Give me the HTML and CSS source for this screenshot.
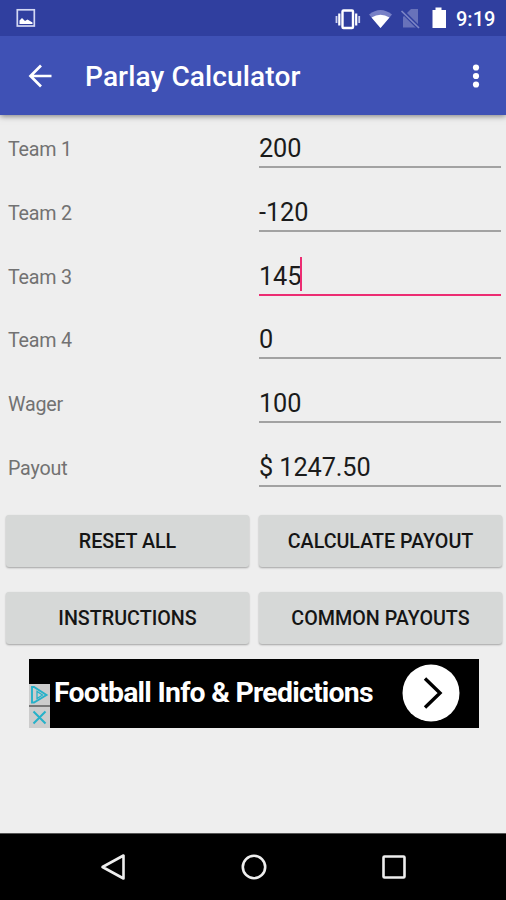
FILE: index.html
```html
<!DOCTYPE html>
<html lang="en">
<head>
<meta charset="utf-8">
<title>Parlay Calculator</title>
<link rel="stylesheet" href="styles.css">
</head>
<body>
<div class="screen">
  <header class="top">
    <div class="status">
      <svg class="status-picture" width="20" height="20" viewBox="0 0 20 20"><rect x="1.300" y="1.800" width="17" height="16.200" fill="none" stroke="#d3d8f3" stroke-width="1.700"/><path d="M3.500 16v-3.500l2.500-2.500 3 3 2.500-1.500 5 3V16z" fill="#fff"/></svg>
      <svg class="status-icons" width="114" height="24" viewBox="0 0 114 24">
        <g fill="none" stroke="#fff"><rect x="8.500" y="4.500" width="10.500" height="17.500" rx="1" stroke-width="2.400"/><path d="M5.300 7.500v12M22.200 7.500v12" stroke-width="2.200"/><path d="M2.500 10v7M25.200 10v7" stroke="#cbd0ef" stroke-width="1.800"/></g>
        <path d="M35 8.500Q46.500 -.5 58 8.500L46.500 22z" fill="#7881c6"/><path d="M37.500 11.500Q46.500 6 55.500 11.500L46.500 22z" fill="#fff"/>
        <path d="M72 8l5-5h7v18.500H69V11z" fill="#6872ba"/><path d="M67 4l18 18" stroke="#303f9f" stroke-width="4"/><path d="M67.500 5l17.500 17" stroke="#7d86c6" stroke-width="1.700"/>
        <path d="M98.500 4h3V1.500h6V4h4.500v18H98.500z" fill="#fff"/>
      </svg>
      <span class="time">9:19</span>
    </div>
    <div class="appbar">
      <svg class="back" width="24" height="24" viewBox="0 0 24 24"><path d="M13 1.500L2.500 12 13 22.500M2.800 12H23.500" fill="none" stroke="#fff" stroke-width="2.700"/></svg>
      <h1 class="title">Parlay Calculator</h1>
      <svg class="more" width="8" height="26" viewBox="0 0 8 26"><g fill="#fff"><circle cx="4" cy="4.500" r="3.100"/><circle cx="4" cy="13" r="3.100"/><circle cx="4" cy="21.500" r="3.100"/></g></svg>
    </div>
  </header>
  <main class="content">
    <div class="form">
      <div class="row"><span class="label">Team 1</span><div class="field">200</div></div>
      <div class="row"><span class="label">Team 2</span><div class="field">-120</div></div>
      <div class="row"><span class="label">Team 3</span><div class="field field-active">145<i class="caret"></i></div></div>
      <div class="row"><span class="label">Team 4</span><div class="field">0</div></div>
      <div class="row"><span class="label">Wager</span><div class="field">100</div></div>
      <div class="row"><span class="label">Payout</span><div class="field">$ 1247.50</div></div>
    </div>
    <div class="buttons">
      <button class="btn">RESET ALL</button>
      <button class="btn">CALCULATE PAYOUT</button>
      <button class="btn">INSTRUCTIONS</button>
      <button class="btn">COMMON PAYOUTS</button>
    </div>
    <div class="ad">
      <div class="ad-marks">
        <svg width="21" height="21" viewBox="0 0 21 21"><path d="M3 3v15.500h2L17.500 11 5 3z" fill="none" stroke="#26b1c9" stroke-width="1.900"/><path d="M8 7.500v7l5.500-3.500z" fill="none" stroke="#26b1c9" stroke-width="1.300"/></svg>
        <svg width="21" height="21" viewBox="0 0 21 21"><path d="M4.500 4.500l12 12M16.500 4.500l-12 12" fill="none" stroke="#26b1c9" stroke-width="2"/></svg>
      </div>
      <span class="ad-text">Football Info &amp; Predictions</span>
      <svg class="ad-go" width="58" height="58" viewBox="0 0 58 58"><circle cx="29" cy="29" r="28.500" fill="#fff"/><path d="M23 14.500L38 29 23 43.500" fill="none" stroke="#000" stroke-width="3.400"/></svg>
    </div>
  </main>
  <nav class="nav">
    <svg width="28" height="30" viewBox="0 0 28 30"><path d="M24.500 3.500v23L3.500 15z" fill="none" stroke="#eee" stroke-width="2.600" stroke-linejoin="round"/></svg>
    <svg width="28" height="30" viewBox="0 0 28 30"><circle cx="14" cy="15" r="11.200" fill="none" stroke="#eee" stroke-width="2.600"/></svg>
    <svg width="28" height="30" viewBox="0 0 28 30"><rect x="3.500" y="4.500" width="21" height="21" rx="1" fill="none" stroke="#eee" stroke-width="2.600"/></svg>
  </nav>
</div>
</body>
</html>
```
FILE: styles.css
```css
* { box-sizing: border-box; }
body { margin: 0; font-family: Roboto, "Liberation Sans", sans-serif; }
svg { display: block; flex: none; }
.screen { width: 506px; height: 900px; display: flex; flex-direction: column; background: #eee; overflow: hidden; }
.top { flex: none; height: 115px; background: #3f51b5; box-shadow: 0 1px 6px rgba(0, 0, 0, .5); }
.status { height: 36px; background: #303f9f; display: flex; align-items: center; padding: 0 11px 0 16px; }
.status-icons { margin-left: auto; }
.time { width: 39px; margin-left: 8px; color: #fff; font-size: 20px; font-weight: 500; line-height: 36px; white-space: nowrap; padding-top: 2px; }
.appbar { height: 79px; display: flex; align-items: center; padding: 0 26px 0 28px; }
.title { margin: 2px 0 0 33px; color: #fff; font-size: 28.1px; font-weight: 500; line-height: 36px; letter-spacing: .1px; white-space: nowrap; }
.more { margin-left: auto; }
.content { flex: 1; padding-top: 3px; }
.form { display: grid; grid-auto-rows: 63.8px; }
.row { display: grid; grid-template-columns: 251px 242px; align-items: start; padding-left: 8px; }
.label { color: #727272; font-size: 19.7px; line-height: 24px; letter-spacing: -.2px; margin-top: 20px; }
.field { height: 50px; padding-top: 15px; border-bottom: 2px solid #a2a2a2; color: #1b1b1b; font-size: 25.3px; line-height: 31px; letter-spacing: -.1px; white-space: nowrap; }
.field-active { display: flex; height: 50.500px; border-bottom: 2px solid #ec2c72; }
.caret { width: 2px; height: 34px; margin-top: -4px; margin-left: -1px; background: #ec2c72; }
.buttons { display: grid; grid-template-columns: 243px 243px; grid-auto-rows: 52px; gap: 25px 10px; padding: 14px 0 0 6px; }
.btn { padding: 2px 0 0; border: 0; border-radius: 3px; background: #d6d8d7; box-shadow: 0 1px 2px rgba(0, 0, 0, .32); color: #151515; font: 500 19.7px/24px Roboto, "Liberation Sans", sans-serif; }
.ad { display: flex; align-items: center; width: 450px; height: 69px; margin: 15px 0 0 29px; padding-right: 19px; background: #000; }
.ad-marks { align-self: flex-end; display: grid; gap: 2px; background: #777; }
.ad-marks svg { background: #ccc; }
.ad-text { margin-left: 4px; color: #fff; font-size: 28.4px; font-weight: 700; line-height: 34px; letter-spacing: -.75px; white-space: nowrap; }
.ad-go { margin-left: auto; }
.nav { flex: none; height: 67px; display: flex; align-items: center; justify-content: space-between; padding: 0 98px 0 99px; background: #000; border-top: 1px solid #555; }
```
